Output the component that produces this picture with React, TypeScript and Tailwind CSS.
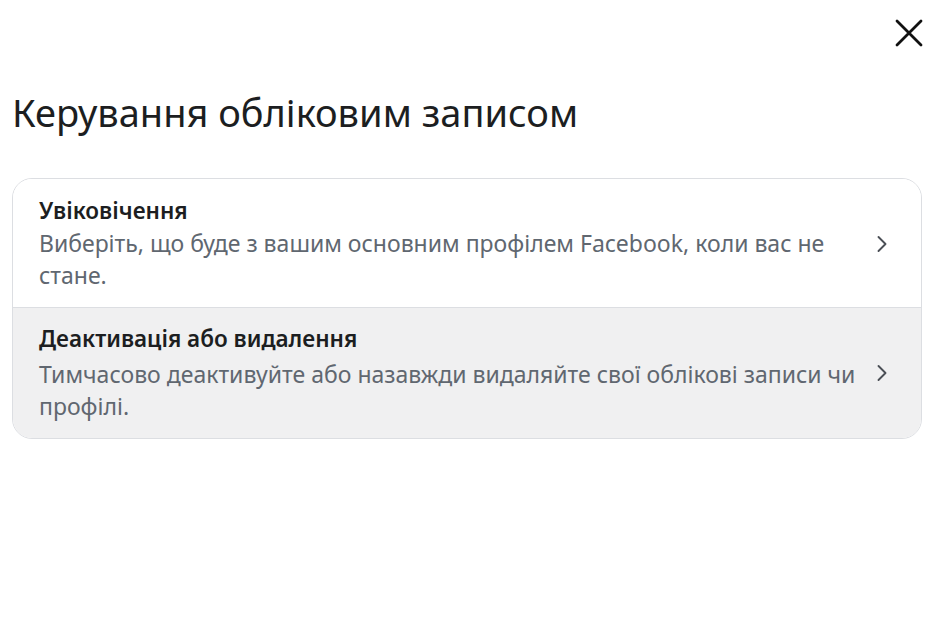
import React from "react";

function Chevron() {
  return (
    <svg width="16" height="18" viewBox="0 0 16 18" fill="none" className="shrink-0">
      <path d="M4.5 2 L11.5 9 L4.5 16" stroke="#4b4f56" strokeWidth="1.9" strokeLinecap="round" strokeLinejoin="round" />
    </svg>
  );
}

function Row({ title, desc, last }: { title: string; desc: string; last?: boolean }) {
  return (
    <div className={`flex items-center gap-[12px] pl-[26px] pr-[31px] ${last ? "bg-[#f0f0f1] pt-[16px] pb-[16px]" : "bg-white border-b border-[#dcdee2] pt-[17px] pb-[16px]"}`}>
      <div className="flex-1 min-w-0">
        <div className="text-[22.5px] leading-[30px] font-semibold text-[#1c1e21]">{title}</div>
        <div className={`text-[23px] leading-[32px] text-[#606770] ${last ? "mt-[4px] pr-[6px]" : "mt-[1px]"}`}>{desc}</div>
      </div>
      <Chevron />
    </div>
  );
}

export default function App() {
  return (
    <div className="w-[940px] h-[631px] bg-white relative" style={{ fontFamily: '"Noto Sans", "Open Sans", sans-serif' }}>
      <button className="absolute right-[16px] top-[18px] w-[30px] h-[30px] flex items-center justify-center">
        <svg width="28" height="28" viewBox="0 0 28 28">
          <path d="M2 2 L26 26 M26 2 L2 26" stroke="#111" strokeWidth="2.8" strokeLinecap="round" />
        </svg>
      </button>
      <div className="pt-[88px] px-[12px]">
        <h1 className="text-[38px] leading-[48px] font-normal text-[#1c1e21]">Керування обліковим записом</h1>
        <div className="mt-[42px] w-[910px] rounded-[20px] border border-[#dcdee2] overflow-hidden">
          <Row title="Увіковічення" desc="Виберіть, що буде з вашим основним профілем Facebook, коли вас не стане." />
          <Row title="Деактивація або видалення" desc="Тимчасово деактивуйте або назавжди видаляйте свої облікові записи чи профілі." last />
        </div>
      </div>
    </div>
  );
}
